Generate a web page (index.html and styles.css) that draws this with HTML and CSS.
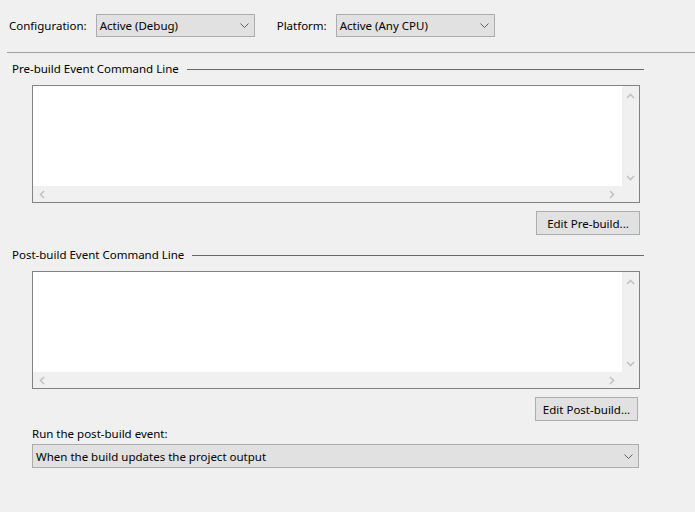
FILE: index.html
```html
<!DOCTYPE html>
<html>
<head>
<meta charset="utf-8">
<link rel="stylesheet" href="styles.css">
</head>
<body>
<div class="toolbar">
  <span class="tb-label">Configuration:</span>
  <div class="combo combo-top">
    <span>Active (Debug)</span>
    <svg class="chev" width="9" height="5" viewBox="0 0 9 5"><path d="M0.5 0.5 L4.5 4.5 L8.5 0.5" fill="none" stroke="#606060" stroke-width="1"/></svg>
  </div>
  <span class="tb-label tb-platform">Platform:</span>
  <div class="combo combo-top">
    <span>Active (Any CPU)</span>
    <svg class="chev" width="9" height="5" viewBox="0 0 9 5"><path d="M0.5 0.5 L4.5 4.5 L8.5 0.5" fill="none" stroke="#606060" stroke-width="1"/></svg>
  </div>
</div>
<div class="divider"></div>

<div class="content">
  <div class="group">
    <div class="group-title"><span>Pre-build Event Command Line</span><div class="rule"></div></div>
    <div class="textbox">
      <div class="tb-area"></div>
      <div class="vscroll">
        <svg width="9" height="6" viewBox="0 0 9 6"><path d="M1 5 L4.5 1.5 L8 5" fill="none" stroke="#c2c2c2" stroke-width="1.6"/></svg>
        <svg width="9" height="6" viewBox="0 0 9 6"><path d="M1 1 L4.5 4.5 L8 1" fill="none" stroke="#c2c2c2" stroke-width="1.6"/></svg>
      </div>
      <div class="hscroll">
        <svg width="6" height="9" viewBox="0 0 6 9"><path d="M5 1 L1.5 4.5 L5 8" fill="none" stroke="#c2c2c2" stroke-width="1.6"/></svg>
        <svg width="6" height="9" viewBox="0 0 6 9"><path d="M1 1 L4.5 4.5 L1 8" fill="none" stroke="#c2c2c2" stroke-width="1.6"/></svg>
      </div>
      <div class="corner"></div>
    </div>
    <div class="btn-row"><button class="btn btn-pre">Edit Pre-build...</button></div>
  </div>

  <div class="group">
    <div class="group-title"><span>Post-build Event Command Line</span><div class="rule"></div></div>
    <div class="textbox">
      <div class="tb-area"></div>
      <div class="vscroll">
        <svg width="9" height="6" viewBox="0 0 9 6"><path d="M1 5 L4.5 1.5 L8 5" fill="none" stroke="#c2c2c2" stroke-width="1.6"/></svg>
        <svg width="9" height="6" viewBox="0 0 9 6"><path d="M1 1 L4.5 4.5 L8 1" fill="none" stroke="#c2c2c2" stroke-width="1.6"/></svg>
      </div>
      <div class="hscroll">
        <svg width="6" height="9" viewBox="0 0 6 9"><path d="M5 1 L1.5 4.5 L5 8" fill="none" stroke="#c2c2c2" stroke-width="1.6"/></svg>
        <svg width="6" height="9" viewBox="0 0 6 9"><path d="M1 1 L4.5 4.5 L1 8" fill="none" stroke="#c2c2c2" stroke-width="1.6"/></svg>
      </div>
      <div class="corner"></div>
    </div>
    <div class="btn-row btn-row-last"><button class="btn btn-post">Edit Post-build...</button></div>
  </div>

  <div class="run">
    <div class="run-label">Run the post-build event:</div>
    <div class="combo combo-wide">
      <span>When the build updates the project output</span>
      <svg class="chev" width="9" height="5" viewBox="0 0 9 5"><path d="M0.5 0.5 L4.5 4.5 L8.5 0.5" fill="none" stroke="#606060" stroke-width="1"/></svg>
    </div>
  </div>
</div>
</body>
</html>
```
FILE: styles.css
```css
* { box-sizing: border-box; }
html, body {
  margin: 0;
  padding: 0;
  background: #f0f0f0;
  width: 695px;
  height: 512px;
  overflow: hidden;
}
body {
  font-family: "Noto Sans", "Open Sans", sans-serif;
  font-size: 11.5px;
  color: #000;
}
.toolbar {
  display: flex;
  align-items: center;
  padding: 14px 0 0 9px;
  height: 37px;
}
.tb-label { margin-right: 9px; }
.tb-platform { margin-left: 22px; margin-right: 9px; }
.combo {
  display: flex;
  align-items: center;
  justify-content: space-between;
  background: #e1e1e1;
  border: 1px solid #acacac;
  padding: 0 5px 0 3px;
}
.combo-top { width: 159px; height: 23px; }
.chev { flex: none; }
.divider {
  margin: 15px 0 0 7px;
  border-top: 1px solid #a0a0a0;
  height: 0;
}
.content {
  width: 644px;
  padding-top: 9px;
}
.group-title {
  display: flex;
  align-items: center;
  padding-left: 12px;
  height: 14px;
  line-height: 14px;
  position: relative;
}
.rule {
  flex: 1;
  align-self: flex-start;
  margin-top: 7px;
  height: 1px;
  background: #696969;
  margin-left: 8px;
}
.textbox {
  margin: 9px 0 0 32px;
  width: 608px;
  height: 118px;
  border: 1px solid #828282;
  display: grid;
  grid-template-columns: 1fr 17px;
  grid-template-rows: 1fr 16px;
}
.tb-area { background: #fff; }
.vscroll {
  background: #f0f0f0;
  display: flex;
  flex-direction: column;
  justify-content: space-between;
  align-items: center;
  padding: 7px 0 5px;
}
.hscroll {
  background: #f0f0f0;
  display: flex;
  justify-content: space-between;
  align-items: center;
  padding: 0 7px 0 6px;
}
.corner { background: #f0f0f0; }
.btn-row {
  display: flex;
  justify-content: flex-end;
  padding-top: 8px;
  height: 45px;
}
.btn-row-last { height: 34px; }
.btn {
  font: inherit;
  color: #000;
  height: 24px;
  background: #e1e1e1;
  border: 1px solid #adadad;
  padding: 0;
  margin: 0;
}
.btn-pre { width: 104px; margin-right: 4px; }
.btn-post { width: 103px; margin-right: 6px; }
.run {
  padding-left: 32px;
  padding-top: 3px;
}
.run-label { height: 16px; line-height: 16px; }
.combo-wide {
  width: 607px;
  height: 24px;
  margin-top: 2px;
}
```
